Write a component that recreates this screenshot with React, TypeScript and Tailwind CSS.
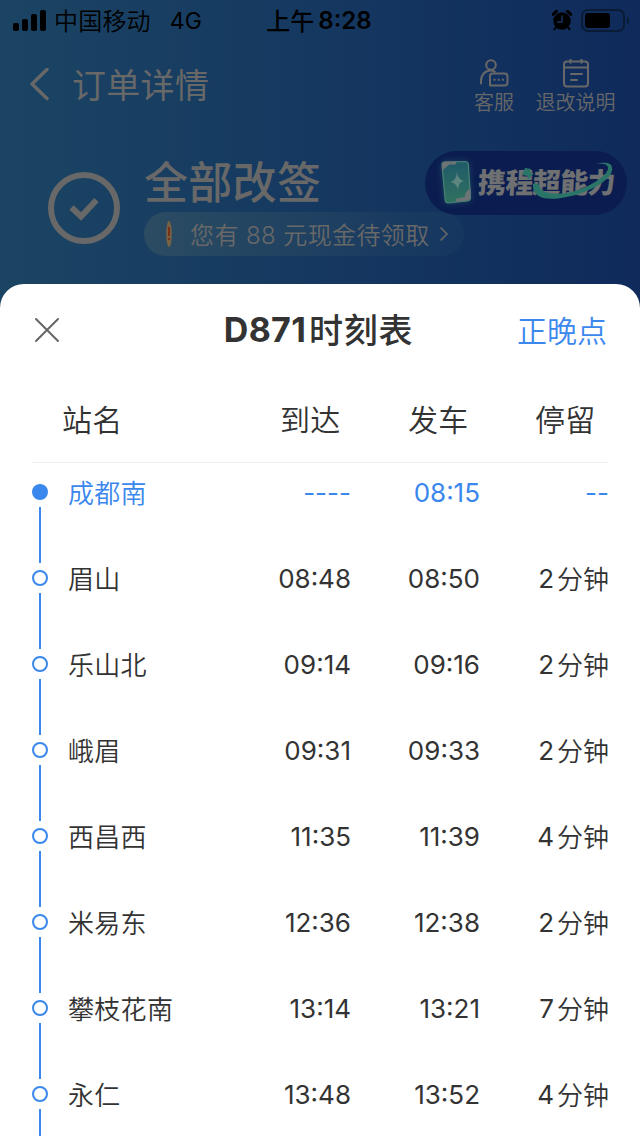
const stops = [
  { name: "成都南", arrive: "----", depart: "08:15", stay: "--", active: true },
  { name: "眉山", arrive: "08:48", depart: "08:50", stay: "2" },
  { name: "乐山北", arrive: "09:14", depart: "09:16", stay: "2" },
  { name: "峨眉", arrive: "09:31", depart: "09:33", stay: "2" },
  { name: "西昌西", arrive: "11:35", depart: "11:39", stay: "4" },
  { name: "米易东", arrive: "12:36", depart: "12:38", stay: "2" },
  { name: "攀枝花南", arrive: "13:14", depart: "13:21", stay: "7" },
  { name: "永仁", arrive: "13:48", depart: "13:52", stay: "4" },
];

function StatusBar() {
  return (
    <div className="flex h-10 items-center pl-[13px] pr-[11px] text-black">
      <div className="flex flex-1 items-center">
        <div className="flex h-[21px] items-end gap-[3px]">
          <span className="h-2 w-1.5 rounded-[2px] bg-black" />
          <span className="h-3 w-1.5 rounded-[2px] bg-black" />
          <span className="h-[17px] w-1.5 rounded-[2px] bg-black" />
          <span className="h-[21px] w-1.5 rounded-[2px] bg-black" />
        </div>
        <span className="ml-2 pt-[3px] text-2xl font-[350] leading-none tracking-[0.2px]">中国移动</span>
        <span className="ml-[19px] pt-0.5 text-[23px] leading-none">4G</span>
      </div>
      <div className="-ml-1 flex items-center gap-1 leading-none">
        <span className="pt-[3px] text-2xl font-medium leading-none">上午</span>
        <span className="pt-0.5 text-[24px] font-semibold leading-none">8:28</span>
      </div>
      <div className="flex flex-1 items-center justify-end">
        <svg width="20" height="21" viewBox="0 0 20 21">
          <circle cx="10" cy="11" r="8.7" />
          <path d="M1 4.5 4.5 1.2M19 4.5 15.5 1.2" stroke="#000" strokeWidth="3" strokeLinecap="round" />
          <path d="m4 17-2 3M16 17l2 3" stroke="#000" strokeWidth="2" />
          <path d="M10 5.5V12H5" fill="none" stroke="#14345f" strokeWidth="1.5" />
        </svg>
        <div className="ml-[9px] flex h-[23px] w-11 items-center rounded-[7px] border-2 border-[#0a1b35] px-0.5">
          <span className="h-[15px] w-[25px] rounded-[3px] bg-black" />
        </div>
        <span className="ml-0.5 h-[7px] w-0.5 rounded-r bg-[#0a1b35]" />
      </div>
    </div>
  );
}

function NavBar() {
  return (
    <div className="flex h-[88px] items-center pl-[29px] pr-[25px] text-[#686868]">
      <svg width="20" height="34" viewBox="0 0 20 34" fill="none" stroke="currentColor" strokeWidth="3.4" strokeLinecap="round" strokeLinejoin="round">
        <path d="M18 2.5 3 17l15 14.5" />
      </svg>
      <h1 className="ml-[23px] flex-1 pt-1 text-[34px] leading-none tracking-[0.3px]">订单详情</h1>
      <div className="flex w-10 flex-col items-center pt-0.5">
        <svg width="30" height="32" viewBox="0 0 30 32" fill="none" stroke="currentColor" strokeWidth="2">
          <circle cx="12" cy="7" r="4.800" />
          <path d="M2 25.500V23c0-6 4-10.500 9.500-10.500 1.800 0 3.500.5 4.500 1.200" strokeLinecap="round" />
          <path d="M13.500 15.500h12a3 3 0 0 1 3 3v6a3 3 0 0 1-3 3H11v-9.500a2.500 2.500 0 0 1 2.500-2.500Z" strokeLinejoin="round" />
          <path d="M14.500 21.700h2M18.700 21.700h2M22.900 21.700h2" />
        </svg>
        <span className="mt-[3px] text-xl font-[350] leading-5 whitespace-nowrap">客服</span>
      </div>
      <div className="ml-[22px] -mr-px flex w-20 flex-col items-center pt-0.5 pr-px">
        <svg width="28" height="32" viewBox="0 0 28 32" fill="none" stroke="currentColor" strokeWidth="2">
          <rect x="2" y="3.500" width="24" height="25" rx="3" />
          <path d="M2 9.500h24M8.500 1v4.500M19.500 1v4.500" />
          <path d="M9 16h11M9 22h6" strokeLinecap="round" />
        </svg>
        <span className="mt-[3px] text-xl font-[350] leading-5 whitespace-nowrap">退改说明</span>
      </div>
    </div>
  );
}

function PowerBadge() {
  return (
    <div className="relative -mr-[14px] mt-[23px] flex h-16 w-[202px] items-center rounded-full bg-[#0b1d50] pl-[15px]">
      <svg width="34" height="46" viewBox="0 0 34 46" className="-mt-0.5 drop-shadow-[0_0_3px_#1c4560]">
        <defs>
          <linearGradient id="card" x1="0" y1="0" x2="0" y2="1">
            <stop offset="0" stopColor="#1f5a69" />
            <stop offset="1" stopColor="#30725f" />
          </linearGradient>
        </defs>
        <path d="M5 3 25 2.500q3 0 3.300 3l2.200 33q0 3-3 3.500l-19 2q-3 .2-3.300-3L2 6q0-3 3-3Z" fill="url(#card)" stroke="#488277" strokeWidth="1.200" />
        <path d="M2 12V5q0-2.500 3-2.500h12l-1.500 3h-6L5 9ZM30.500 29v9q0 3-3 3.500l-12 1.500 1-3.500 8-1.200 1.500-5Z" fill="#6d7476" />
        <path d="M17 13q1 8 7 9-6 1-6 9-1.500-7-7.500-8 6-1.500 6.500-10Z" fill="#5f8580" />
      </svg>
      <span className="ml-1 origin-left -skew-x-3 text-[28px] font-black leading-none tracking-[-0.6px] whitespace-nowrap text-[#6e7071]">
        携程超能力
      </span>
      <svg className="absolute left-[96px] top-2" width="100" height="46" viewBox="0 0 100 46" fill="none">
        <path d="M12 25c-1 12 10 17 28 14 24-3 54-18 51-31-1-5-9-5-16-3 7-1 12 0 12 4 0 9-24 22-41 25-15 2-26 0-28-8q-3-3-6-1Z" fill="#2b7468" />
        <path d="m4 9 6 1-1 4h4l-7 8 1-5-6-1Z" fill="#2b7468" />
      </svg>
    </div>
  );
}

function OrderStatus() {
  return (
    <div className="flex h-[156px] pl-12 pr-[27px] text-[#686868]">
      <svg className="mt-11" width="72" height="72" viewBox="0 0 72 72" fill="none" stroke="currentColor">
        <circle cx="36" cy="36" r="33" strokeWidth="6" />
        <path d="m23.500 35.500 9.500 9 15.500-16.500" strokeWidth="6" />
      </svg>
      <div className="ml-6 mt-[29px] w-[320px] shrink-0">
        <h2 className="flex h-[55px] items-center pb-[3px] text-[44px] font-medium leading-none tracking-[0.3px]">全部改签</h2>
        <div className="flex h-11 items-center rounded-full bg-linear-to-r from-[#2b4c62] to-[#15365f] pl-[22px]">
          <svg width="6" height="28" viewBox="0 0 6 28">
            <ellipse cx="3" cy="14" rx="2.800" ry="13" fill="#786044" />
            <path d="M3 7v9M3 18v2" stroke="#7a2e10" strokeWidth="1.800" />
          </svg>
          <span className="ml-[18px] pt-[3px] text-2xl font-[350] leading-none tracking-[0.4px] whitespace-nowrap">您有 88 元现金待领取</span>
          <svg className="ml-[9px]" width="10" height="16" viewBox="0 0 10 16" fill="none" stroke="currentColor" strokeWidth="1.600">
            <path d="m1.500 1.500 6.500 6.500-6.500 6.500" />
          </svg>
        </div>
      </div>
      <div className="-ml-[39px]">
        <PowerBadge />
      </div>
    </div>
  );
}

function StopRow({ stop }: { stop: (typeof stops)[0] }) {
  return (
    <li className={stop.active ? "flex h-[86px] text-[#3a87ee]" : "flex h-[86px] text-[#333]"}>
      <div className="flex w-4 flex-col items-center gap-[7px]">
        <span className={stop.active ? "h-4 w-4 rounded-full bg-[#3a87ee]" : "h-4 w-4 rounded-full border-2 border-[#3a87ee]"} />
        <span className="h-14 w-0.5 bg-[#3a87ee]" />
      </div>
      <div className="ml-5 flex h-[18px] flex-1 items-center text-[26px] leading-none">
        <span className="w-[153px] pt-px font-[350] tracking-[0.3px] whitespace-nowrap">{stop.name}</span>
        <span className="w-[130px] text-right">{stop.arrive}</span>
        <span className="w-[129px] text-right">{stop.depart}</span>
        <span className="-mr-px flex flex-1 items-center justify-end gap-[3px]">
          {stop.stay}
          {!stop.active && <span className="pt-px font-[350]">分钟</span>}
        </span>
      </div>
    </li>
  );
}

export default function App() {
  return (
    <div className="flex h-[1136px] w-[640px] flex-col overflow-hidden bg-linear-to-r from-[#1b4463] via-[#153860] to-[#0f2a5b] font-[Inter,'Noto_Sans_CJK_SC',sans-serif]">
      <header className="h-[284px] shrink-0">
        <StatusBar />
        <NavBar />
        <OrderStatus />
      </header>

      <main className="flex-1 overflow-hidden rounded-t-[24px] bg-white px-8 text-[#333]">
        <div className="flex h-[92px] items-center">
          <div className="flex-1 pl-0.5">
            <svg width="26" height="26" viewBox="0 0 26 26" fill="none" stroke="#666" strokeWidth="2" strokeLinecap="round">
              <path d="m2 2 22 22M24 2 2 24" />
            </svg>
          </div>
          <h2 className="-ml-1 flex items-center gap-[3px] text-[34px] leading-none whitespace-nowrap">
            <span className="font-bold tracking-[0.3px]">D871</span>
            <span className="pt-0.5 font-medium tracking-[0.7px]">时刻表</span>
          </h2>
          <span className="flex-1 pr-px pt-0.5 text-right text-[30px] font-[350] leading-none text-[#3a87ee]">正晚点</span>
        </div>

        <div className="flex h-[87px] items-center border-b border-[#eee] pl-[30px] pr-3 pt-0.5 text-[30px] font-[350] leading-none tracking-[0.3px]">
          <span className="w-[218px]">站名</span>
          <span className="w-32">到达</span>
          <span className="w-[127px]">发车</span>
          <span>停留</span>
        </div>

        <ul className="pt-[21px]">
          {stops.map((stop) => (
            <StopRow key={stop.name} stop={stop} />
          ))}
        </ul>
      </main>
    </div>
  );
}
